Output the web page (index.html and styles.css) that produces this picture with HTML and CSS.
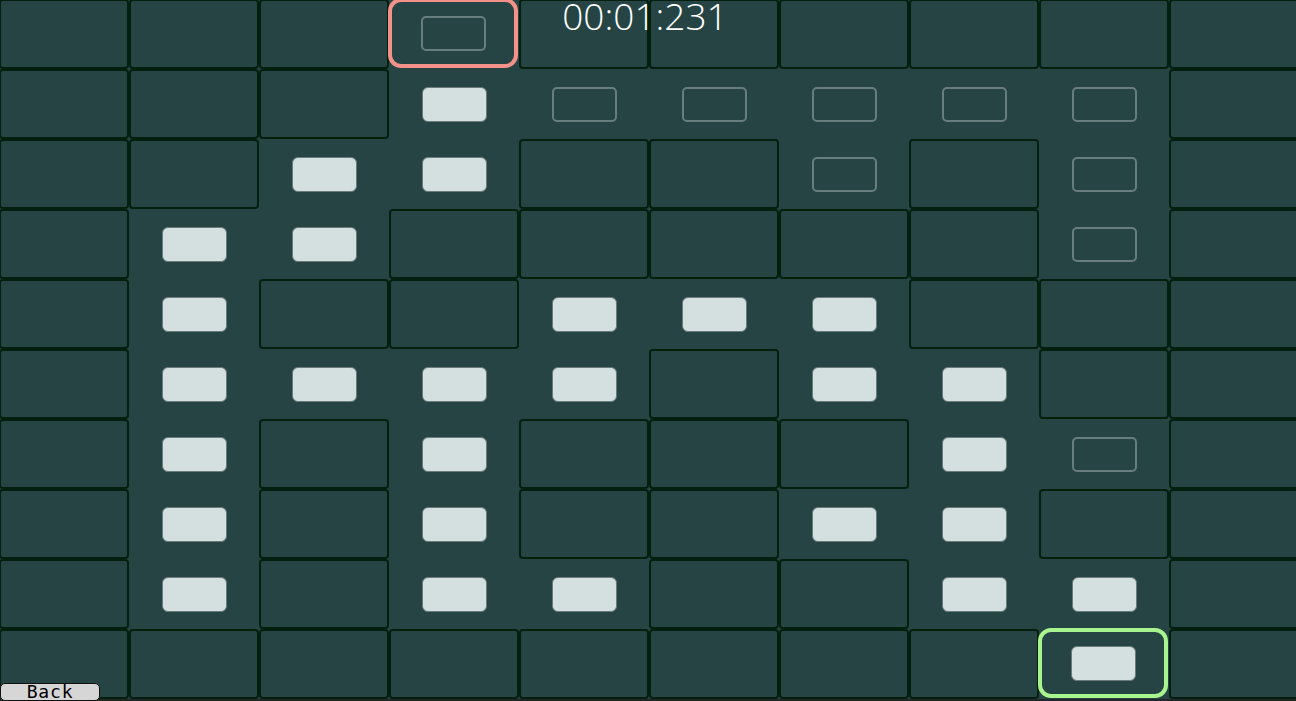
FILE: index.html
```html
<!DOCTYPE html>
<html>
<head>
<meta charset="utf-8">
<link rel="stylesheet" href="styles.css">
</head>
<body>
<div class="board">
  <!-- row 0 -->
  <div class="cell wall"></div><div class="cell wall"></div><div class="cell wall"></div>
  <div class="cell start"><span class="goal"></span></div>
  <div class="cell wall"></div><div class="cell wall"></div><div class="cell wall"></div><div class="cell wall"></div><div class="cell wall"></div><div class="cell wall"></div>
  <!-- row 1 -->
  <div class="cell wall"></div><div class="cell wall"></div><div class="cell wall"></div>
  <div class="cell"><span class="dot"></span></div>
  <div class="cell"><span class="goal"></span></div><div class="cell"><span class="goal"></span></div><div class="cell"><span class="goal"></span></div><div class="cell"><span class="goal"></span></div><div class="cell"><span class="goal"></span></div>
  <div class="cell wall"></div>
  <!-- row 2 -->
  <div class="cell wall"></div><div class="cell wall"></div>
  <div class="cell"><span class="dot"></span></div><div class="cell"><span class="dot"></span></div>
  <div class="cell wall"></div><div class="cell wall"></div>
  <div class="cell"><span class="goal"></span></div>
  <div class="cell wall"></div>
  <div class="cell"><span class="goal"></span></div>
  <div class="cell wall"></div>
  <!-- row 3 -->
  <div class="cell wall"></div>
  <div class="cell"><span class="dot"></span></div><div class="cell"><span class="dot"></span></div>
  <div class="cell wall"></div><div class="cell wall"></div><div class="cell wall"></div><div class="cell wall"></div><div class="cell wall"></div>
  <div class="cell"><span class="goal"></span></div>
  <div class="cell wall"></div>
  <!-- row 4 -->
  <div class="cell wall"></div>
  <div class="cell"><span class="dot"></span></div>
  <div class="cell wall"></div><div class="cell wall"></div>
  <div class="cell"><span class="dot"></span></div><div class="cell"><span class="dot"></span></div><div class="cell"><span class="dot"></span></div>
  <div class="cell wall"></div><div class="cell wall"></div><div class="cell wall"></div>
  <!-- row 5 -->
  <div class="cell wall"></div>
  <div class="cell"><span class="dot"></span></div><div class="cell"><span class="dot"></span></div><div class="cell"><span class="dot"></span></div><div class="cell"><span class="dot"></span></div>
  <div class="cell wall"></div>
  <div class="cell"><span class="dot"></span></div><div class="cell"><span class="dot"></span></div>
  <div class="cell wall"></div><div class="cell wall"></div>
  <!-- row 6 -->
  <div class="cell wall"></div>
  <div class="cell"><span class="dot"></span></div>
  <div class="cell wall"></div>
  <div class="cell"><span class="dot"></span></div>
  <div class="cell wall"></div><div class="cell wall"></div><div class="cell wall"></div>
  <div class="cell"><span class="dot"></span></div>
  <div class="cell"><span class="goal"></span></div>
  <div class="cell wall"></div>
  <!-- row 7 -->
  <div class="cell wall"></div>
  <div class="cell"><span class="dot"></span></div>
  <div class="cell wall"></div>
  <div class="cell"><span class="dot"></span></div>
  <div class="cell wall"></div><div class="cell wall"></div>
  <div class="cell"><span class="dot"></span></div><div class="cell"><span class="dot"></span></div>
  <div class="cell wall"></div><div class="cell wall"></div>
  <!-- row 8 -->
  <div class="cell wall"></div>
  <div class="cell"><span class="dot"></span></div>
  <div class="cell wall"></div>
  <div class="cell"><span class="dot"></span></div><div class="cell"><span class="dot"></span></div>
  <div class="cell wall"></div><div class="cell wall"></div>
  <div class="cell"><span class="dot"></span></div><div class="cell"><span class="dot"></span></div>
  <div class="cell wall"></div>
  <!-- row 9 -->
  <div class="cell wall"></div><div class="cell wall"></div><div class="cell wall"></div><div class="cell wall"></div><div class="cell wall"></div><div class="cell wall"></div><div class="cell wall"></div><div class="cell wall"></div>
  <div class="cell finish"><span class="dot"></span></div>
  <div class="cell wall"></div>
</div>
<div class="timer">00:01:231</div>
<button class="back">Back</button>
</body>
</html>
```

FILE: styles.css
```css
html {
  background: #232626;
}
body {
  margin: 0;
  width: 1296px;
  height: 701px;
  overflow: hidden;
  position: relative;
  background: #232626;
}
.board {
  display: grid;
  grid-template-columns: repeat(10, 130px);
  grid-template-rows: repeat(10, 70px);
  width: 1300px;
  height: 700px;
  margin: -1px 0 0 -1px;
  background: #264444;
}
.cell {
  box-sizing: border-box;
  display: flex;
  align-items: center;
  justify-content: center;
}
.wall {
  border: 2px solid #03200f;
  border-radius: 4px;
  background: #264444;
}
.start,
.finish {
  margin: -1px 1px 1px -1px;
  border-width: 4px;
  border-style: solid;
  border-radius: 13px;
}
.start {
  border-color: #f4928a;
}
.finish {
  border-color: #a8f48e;
}
.dot {
  box-sizing: border-box;
  width: 65px;
  height: 35px;
  background: #d4dfe0;
  border: 1px solid #6a7b7c;
  border-radius: 6px;
}
.goal {
  box-sizing: border-box;
  width: 65px;
  height: 35px;
  border: 2px solid #687d7e;
  border-radius: 5px;
}
.timer {
  position: absolute;
  top: 0;
  left: 0;
  width: 1290px;
  text-align: center;
  color: #ffffff;
  font-family: "Open Sans", sans-serif;
  font-weight: 300;
  font-size: 37px;
  line-height: 31px;
}
.back {
  position: absolute;
  left: 0;
  top: 683px;
  width: 100px;
  height: 18px;
  margin: 0;
  padding: 0;
  box-sizing: border-box;
  background: #d6d6d6;
  border: 1px solid #111111;
  border-radius: 5px;
  color: #000000;
  font-family: "DejaVu Sans Mono", monospace;
  font-size: 18px;
  line-height: 16px;
  letter-spacing: 0.8px;
  text-align: center;
}
```
